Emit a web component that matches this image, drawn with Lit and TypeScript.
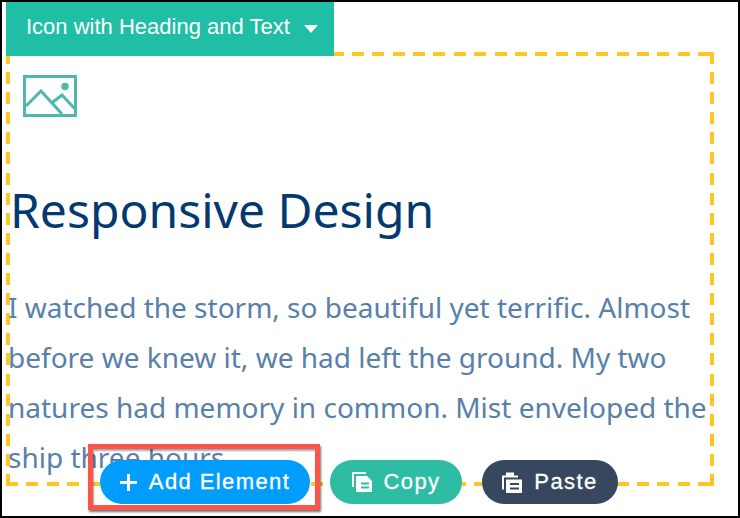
import { html, css, LitElement } from 'lit';
import { customElement } from 'lit/decorators.js';

const plusIcon = html`<svg viewBox="0 0 17 17" width="17" height="17">
	<path d="M7 0h3v7h7v3h-7v7H7v-7H0V7h7z" fill="#fff"/>
</svg>`;

const copyIcon = html`<svg viewBox="0 0 20 20" width="20" height="20">
	<path d="M0 0h14v2H2v13H0z" fill="#fff"/>
	<path fill-rule="evenodd" d="M4 4h11l5 5v11H4zM9 10.500v2h8v-2zM9 14.500v2h8v-2z" fill="#fff"/>
</svg>`;

const pasteIcon = html`<svg viewBox="0 0 20 20" width="20" height="21">
	<path d="M0 3h4V0h8v3h4v2H2v12H0z" fill="#fff"/>
	<path fill-rule="evenodd" d="M4 7h16v14H4zM8 10.500v2h9v-2zM8 15v2h9v-2z" fill="#fff"/>
</svg>`;

@customElement('app-root')
export class AppRoot extends LitElement {
	static styles = css`
		:host {
			display: block;
			width: 740px;
			height: 518px;
			overflow: hidden;
		}
		.screen {
			box-sizing: border-box;
			position: relative;
			width: 740px;
			height: 518px;
			background: #fff;
			border: 2px solid #000;
			padding: 50px 24px 0 4px;
		}
		.frame {
			--dash: #fdc826;
			box-sizing: border-box;
			height: 434px;
			padding: 23px 0 0 4px;
			background:
				repeating-linear-gradient(270deg, transparent 0 4px, var(--dash) 4px 16px, transparent 16px 20.35px) 0 0 / 100% 4px no-repeat,
				repeating-linear-gradient(270deg, transparent 0 4px, var(--dash) 4px 16px, transparent 16px 20.35px) 0 100% / 100% 4px no-repeat,
				repeating-linear-gradient(180deg, var(--dash) 0 12px, transparent 12px 20.095px) 0 0 / 4px 100% no-repeat,
				repeating-linear-gradient(180deg, var(--dash) 0 12px, transparent 12px 20.095px) 100% 0 / 4px 100% no-repeat;
		}
		.tab {
			position: absolute;
			left: 4px;
			top: 0;
			box-sizing: border-box;
			width: 328px;
			height: 54px;
			background: #20bfa5;
			color: #fff;
			font: 22px/50px 'Liberation Sans', sans-serif;
			padding: 0 0 4px 20px;
			display: flex;
			align-items: center;
			gap: 14px;
		}
		.caret {
			width: 0;
			height: 0;
			margin-top: 4px;
			border: 7.5px solid transparent;
			border-top: 8px solid #fff;
			border-bottom: 0;
		}
		.picture {
			display: block;
			margin-left: 13px;
		}
		h1 {
			margin: 61px 0 0;
			font: 400 48px/64px 'Noto Sans', sans-serif;
			color: #03396f;
		}
		p {
			margin: 40px 0 0 -2px;
			font: 400 28px/50px 'Noto Sans', sans-serif;
			color: #5880aa;
			white-space: nowrap;
		}
		.actions {
			position: absolute;
			left: 98px;
			top: 458px;
			display: flex;
			gap: 20px;
		}
		.btn {
			box-sizing: border-box;
			height: 44px;
			border-radius: 22px;
			display: flex;
			align-items: center;
			justify-content: center;
			gap: 12px;
			color: #fff;
			font: 400 22px/44px 'Liberation Sans', sans-serif;
			letter-spacing: 1.4px;
			-webkit-text-stroke: 0.3px #fff;
		}
		.add { width: 210px; background: #009dff; }
		.copy { width: 132px; background: #2fbca5; }
		.paste { width: 136px; background: #37475f; }
		.highlight {
			position: absolute;
			left: 86px;
			top: 442px;
			box-sizing: border-box;
			width: 232px;
			height: 66px;
			border: 5px solid #fb5549;
			box-shadow: 1px 2px 2px rgba(0, 0, 0, 0.55), inset 1px 2px 2px rgba(0, 0, 0, 0.35);
		}
	`;

	render() {
		return html`
			<div class="screen">
				<div class="frame">
					<svg class="picture" viewBox="0 0 54 42" width="54" height="42" fill="none" stroke="#4fb8ab" stroke-width="3">
						<rect x="1.500" y="1.500" width="51" height="39"/>
						<path d="M3 31 18 16 39 39M30 27 39 20 52 34"/>
						<circle cx="42" cy="11.500" r="3.700" fill="#4fb8ab" stroke="none"/>
					</svg>
					<h1>Responsive Design</h1>
					<p>I watched the storm, so beautiful yet terrific. Almost<br>before we knew it, we had left the ground. My two<br>natures had memory in common. Mist enveloped the<br>ship three hours.</p>
				</div>
				<div class="tab">Icon with Heading and Text <span class="caret"></span></div>
				<div class="actions">
					<div class="btn add">${plusIcon} Add Element</div>
					<div class="btn copy">${copyIcon} Copy</div>
					<div class="btn paste">${pasteIcon} Paste</div>
				</div>
				<div class="highlight"></div>
			</div>
		`;
	}
}
